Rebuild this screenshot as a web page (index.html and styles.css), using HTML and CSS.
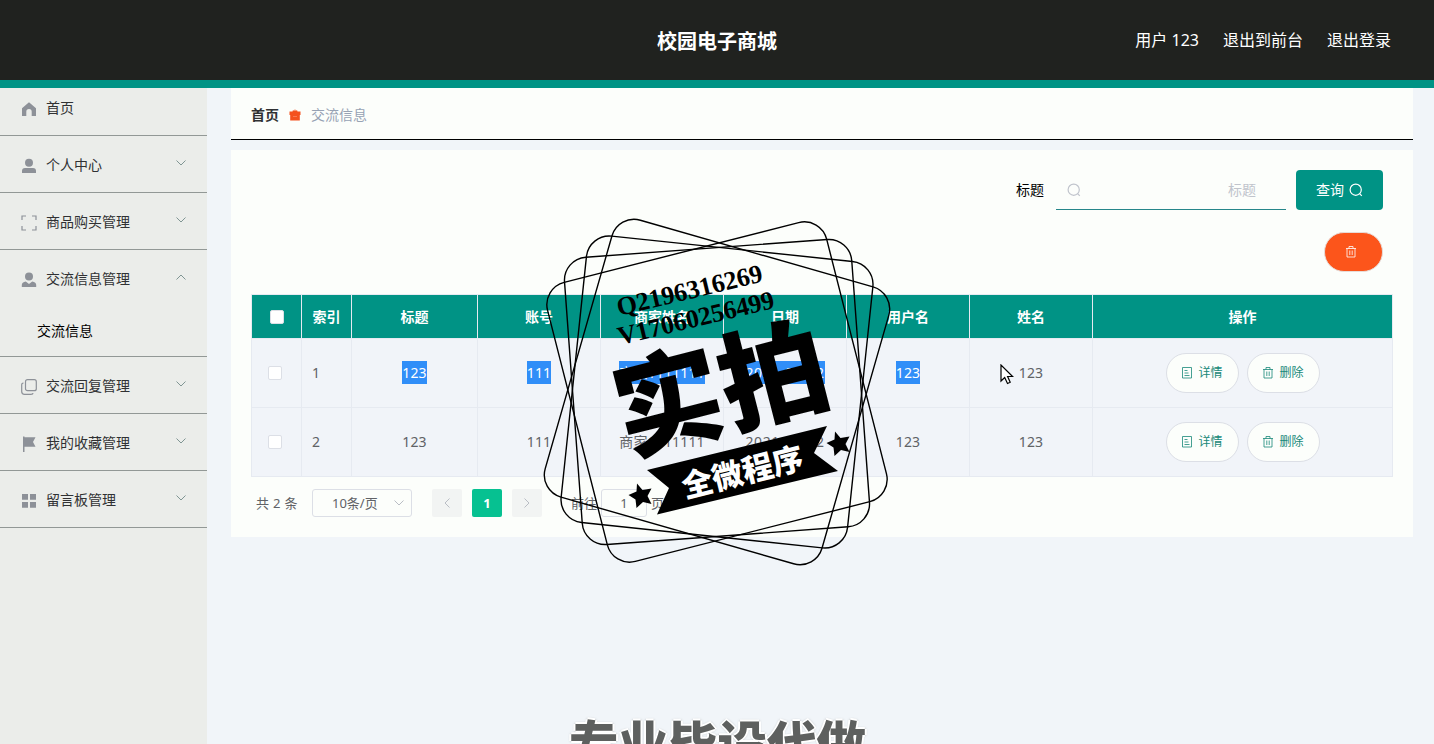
FILE: index.html
```html
<!DOCTYPE html>
<html lang="zh-CN">
    <head>
        <meta charset="utf-8">
        <title>校园电子商城</title>
        <link rel="stylesheet" href="styles.css">
    </head>
    <body>
        <svg class="sprite" width="0" height="0">
            <symbol id="arrow" viewBox="0 0 12 12"><path d="M1.5 3.5 6 8l4.5-4.5" fill="none" stroke="currentColor"/></symbol>
            <symbol id="search" viewBox="0 0 14 14"><circle cx="6.7" cy="6.7" r="5.6" fill="none" stroke="currentColor" stroke-width="1.2"/><path d="m10.6 10.6 2.2 2.2" stroke="currentColor" stroke-width="1.2"/></symbol>
            <symbol id="trash" viewBox="0 0 12 12"><path d="M1 2.500h10M4 2.500v-2h4v2M2 2.500v8.500h8V2.500M4.800 4.500v4.500M7.200 4.500v4.500" fill="none" stroke="currentColor" stroke-width=".8"/></symbol>
            <symbol id="doc" viewBox="0 0 12 12"><path d="M1.500.5h9v10.500h-9zM3.500 3.500h3M3.500 6h4M3.500 8.500h5" fill="none" stroke="currentColor" stroke-width=".8"/></symbol>
        </svg>
        <header class="header">
            <h1 class="title">校园电子商城</h1>
            <nav class="user-nav">
                <a>用户 123</a>
                <a>退出到前台</a>
                <a>退出登录</a>
            </nav>
        </header>
        <div class="layout">
            <aside class="sidebar">
                <div class="menu-item first">
                    <svg class="menu-icon" viewBox="0 0 16 16"><path d="M1 7.200 8 1.200l7 6V15h-4.300v-4.300a2.700 2.700 0 0 0-5.400 0V15H1z" fill="currentColor"/></svg>
                    <span>首页</span>
                </div>
                <div class="menu-item">
                    <svg class="menu-icon" viewBox="0 0 16 16"><circle cx="8" cy="4.800" r="4" fill="currentColor"/><path d="M1 15v-2q0-3 3-3h8q3 0 3 3v2z" fill="currentColor"/></svg>
                    <span>个人中心</span>
                    <svg class="arrow"><use href="#arrow"/></svg>
                </div>
                <div class="menu-item">
                    <svg class="menu-icon" viewBox="0 0 16 16"><path d="M1 5V1h4M11 1h4v4M15 11v4h-4M5 15H1v-4" fill="none" stroke="currentColor" stroke-width="1.200"/></svg>
                    <span>商品购买管理</span>
                    <svg class="arrow"><use href="#arrow"/></svg>
                </div>
                <div class="menu-group">
                    <div class="menu-item">
                        <svg class="menu-icon" viewBox="0 0 16 16"><circle cx="8" cy="4.600" r="4" fill="currentColor"/><path d="M.8 15v-2q0-3 4-3.500L8 12l3.200-2.500q4 .5 4 3.500v2z" fill="currentColor"/></svg>
                        <span>交流信息管理</span>
                        <svg class="arrow open"><use href="#arrow"/></svg>
                    </div>
                    <div class="submenu-item">交流信息</div>
                </div>
                <div class="menu-item">
                    <svg class="menu-icon" viewBox="0 0 16 16"><rect x="4.500" y=".7" width="10.800" height="11" rx="2" fill="none" stroke="currentColor" stroke-width="1.200"/><path d="M2.500 4C1 4 .7 4.800.7 6v6.500q0 2.800 2.800 2.800h6.500q2 0 2-1.300" fill="none" stroke="currentColor" stroke-width="1.200"/></svg>
                    <span>交流回复管理</span>
                    <svg class="arrow"><use href="#arrow"/></svg>
                </div>
                <div class="menu-item">
                    <svg class="menu-icon" viewBox="0 0 16 16"><path d="M2 .5h1.500V16H2zM3.500 1.200h11L12 6l2.500 4.800h-11z" fill="currentColor"/></svg>
                    <span>我的收藏管理</span>
                    <svg class="arrow"><use href="#arrow"/></svg>
                </div>
                <div class="menu-item">
                    <svg class="menu-icon" viewBox="0 0 16 16"><path d="M1 1h6v5.700H1zM9 1h6v5.700H9zM1 9h6v5.700H1zM9 9h6v5.700H9z" fill="currentColor"/></svg>
                    <span>留言板管理</span>
                    <svg class="arrow"><use href="#arrow"/></svg>
                </div>
            </aside>
            <main class="main">
                <div class="breadcrumb">
                    <b>首页</b>
                    <svg class="gift" viewBox="0 0 12 12"><path d="M.5 2.500h3L4 1l1.200 1L6 0l.8 2L8 1l.5 1.500h3V6H.5zM1.200 6h9.600v5.500H1.200z" fill="#f4511e"/><path d="M4 7.500h4" stroke="#fa8b66" stroke-width=".7"/></svg>
                    <span class="current">交流信息</span>
                </div>
                <section class="card">
                    <form class="search">
                        <label>标题</label>
                        <div class="search-input">
                            <svg class="icon-14"><use href="#search"/></svg>
                            <span>标题</span>
                        </div>
                        <div class="btn-query">查询 <svg class="icon-14"><use href="#search"/></svg></div>
                    </form>
                    <div class="tools">
                        <div class="btn-delete"><svg class="icon-12"><use href="#trash"/></svg></div>
                    </div>
                    <table class="table">
                        <colgroup>
                            <col class="w50"><col class="w50"><col class="w126">
                            <col class="w123"><col class="w123"><col class="w123"><col class="w123"><col class="w123">
                            <col>
                        </colgroup>
                        <thead>
                            <tr>
                                <th><i class="check"></i></th>
                                <th>索引</th>
                                <th>标题</th>
                                <th>账号</th>
                                <th>商家姓名</th>
                                <th>日期</th>
                                <th>用户名</th>
                                <th>姓名</th>
                                <th>操作</th>
                            </tr>
                        </thead>
                        <tbody>
                            <tr>
                                <td><i class="check"></i></td>
                                <td class="index">1</td>
                                <td><span class="selected">123</span></td>
                                <td><span class="selected">111</span></td>
                                <td><span class="selected">商家1111111</span></td>
                                <td class="date"><span class="selected">2021-03-12</span></td>
                                <td><span class="selected">123</span></td>
                                <td>123</td>
                                <td>
                                    <div class="actions">
                                        <a class="btn-row"><svg class="icon-12"><use href="#doc"/></svg>详情</a>
                                        <a class="btn-row"><svg class="icon-12"><use href="#trash"/></svg>删除</a>
                                    </div>
                                </td>
                            </tr>
                            <tr>
                                <td><i class="check"></i></td>
                                <td class="index">2</td>
                                <td>123</td>
                                <td>111</td>
                                <td>商家1111111</td>
                                <td class="date">2021-03-12</td>
                                <td>123</td>
                                <td>123</td>
                                <td>
                                    <div class="actions">
                                        <a class="btn-row"><svg class="icon-12"><use href="#doc"/></svg>详情</a>
                                        <a class="btn-row"><svg class="icon-12"><use href="#trash"/></svg>删除</a>
                                    </div>
                                </td>
                            </tr>
                        </tbody>
                    </table>
                    <div class="pagination">
                        <span class="total">共 2 条</span>
                        <div class="page-size">10条/页<svg class="arrow"><use href="#arrow"/></svg></div>
                        <div class="pager"><svg class="arrow left"><use href="#arrow"/></svg></div>
                        <div class="pager active">1</div>
                        <div class="pager"><svg class="arrow right"><use href="#arrow"/></svg></div>
                        <span class="jump">前往</span>
                        <div class="jump-input">1</div>
                        <span>页</span>
                    </div>
                </section>
            </main>
        </div>

        <svg class="stamp" viewBox="537 211 360 360">
            <g fill="none" stroke="#000" stroke-width="1.400">
                <rect x="573" y="248" width="288" height="288" rx="23" transform="rotate(16 717 392)"/>
                <rect x="573" y="248" width="288" height="288" rx="23" transform="rotate(6 717 392)"/>
                <rect x="573" y="248" width="288" height="288" rx="23" transform="rotate(-4.200 717 392)"/>
                <rect x="573" y="248" width="288" height="288" rx="23" transform="rotate(-14.300 717 392)"/>
            </g>
            <text class="stamp-num" transform="translate(619 316) rotate(-13.500)" textLength="149">Q2196316269</text>
            <text class="stamp-num" transform="translate(620 345) rotate(-13.500)" textLength="160">V17060256499</text>
            <text class="stamp-big" transform="translate(626 454) rotate(-14.300)">实拍</text>
            <path d="M647 470 827 426 814 453 838 471 657 514.500 669 488z"/>
            <text class="stamp-small" transform="translate(685 498) rotate(-14)">全微程序</text>
            <path id="star" d="m637 483.500 5.500 6.500 9-1.500-4 7.500 4 8-8.500-2-6.500 6-1-8.500-7-4.500 8-3.500z"/>
            <use href="#star" x="198" y="-52"/>
        </svg>
        <div class="promo">专业毕设代做</div>
        <svg class="cursor" viewBox="0 0 14 21"><path d="M1 1v16l3.700-3.500L7.500 19.500l2.700-1.200-2.600-5.800h5z" fill="#fff" stroke="#000" stroke-width="1.200"/></svg>
    </body>
</html>
```

FILE: styles.css
```css
* {
    box-sizing: border-box;
}
body {
    margin: 0;
    height: 744px;
    position: relative;
    overflow: hidden;
    display: flex;
    flex-direction: column;
    background: #f1f5f9;
    color: #606266;
    font: 14px/20px "Noto Sans", "Noto Sans CJK SC", sans-serif;
}
.sprite {
    position: absolute;
}
.header {
    height: 88px;
    flex-shrink: 0;
    display: grid;
    grid-template-columns: 1fr auto 1fr;
    align-items: center;
    padding: 0 43px;
    background: #20221f;
    border-bottom: 8px solid #009385;
    color: #fff;
}
.title {
    grid-column: 2;
    margin: 0;
    padding-top: 3px;
    font-size: 20px;
    line-height: 28px;
}
.user-nav {
    display: flex;
    justify-content: flex-end;
    gap: 24px;
    font-size: 16px;
}
.layout {
    flex: 1;
    display: flex;
}

/* sidebar */
.sidebar {
    width: 207px;
    background: #ebedea;
}
.menu-item {
    height: 57px;
    display: flex;
    align-items: center;
    padding: 1px 20px 0 21px;
    border-bottom: 1px solid #929896;
    color: #303133;
}
.menu-item.first {
    height: 48px;
    padding-bottom: 8px;
}
.menu-icon {
    width: 16px;
    height: 16px;
    margin: 2px 9px 0 0;
    color: #8d9198;
}
.arrow {
    width: 12px;
    height: 12px;
    color: #7f9593;
}
.menu-item .arrow {
    margin: 0 0 4px auto;
}
.arrow.open {
    transform: rotate(180deg);
}
.menu-group {
    height: 107px;
    border-bottom: 1px solid #929896;
}
.menu-group .menu-item {
    padding-top: 0;
    border-bottom: 0;
}
.submenu-item {
    padding: 14px 37px;
    color: #000;
}

/* content */
.main {
    flex: 1;
    padding: 0 21px 0 24px;
}
.breadcrumb {
    height: 52px;
    display: flex;
    align-items: center;
    padding: 2px 20px 0;
    background: #fcfefb;
    border-bottom: 1px solid #000;
    color: #303133;
}
.gift {
    width: 12px;
    height: 12px;
    margin: 0 10px;
}
.current {
    color: #97a2b4;
}
.card {
    height: 387px;
    margin-top: 10px;
    padding: 20px;
    background: #fcfefb;
}
.search {
    height: 40px;
    display: flex;
    justify-content: flex-end;
    align-items: center;
    padding-right: 10px;
    color: #000;
}
.search-input {
    width: 230px;
    height: 40px;
    display: flex;
    align-items: center;
    justify-content: space-between;
    margin: 0 10px 0 12px;
    padding: 0 30px 0 11px;
    border-bottom: 1px solid #26868a;
    color: #c0c4cc;
}
.icon-14 {
    width: 14px;
    height: 14px;
}
.icon-12 {
    width: 12px;
    height: 12px;
}
.btn-query {
    width: 87px;
    height: 40px;
    display: flex;
    align-items: center;
    justify-content: center;
    gap: 5px;
    border-radius: 4px;
    background: #009385;
    color: #fff;
}
.tools {
    display: flex;
    justify-content: flex-end;
    padding: 22px 10px;
}
.btn-delete {
    width: 59px;
    height: 40px;
    display: flex;
    align-items: center;
    justify-content: center;
    padding-right: 5px;
    border: 1px solid #e7dcd8;
    border-radius: 20px;
    background: #fc551b;
    color: #fff;
}
.table {
    width: 1142px;
    table-layout: fixed;
    border-collapse: collapse;
    text-align: center;
}
.w50 {
    width: 50px;
}
.w123 {
    width: 123px;
}
.w126 {
    width: 126px;
}
.table th,
.table td {
    padding: 0;
    border: 1px solid #e6eaf1;
}
.table th {
    height: 44px;
    background: #009385;
    color: #fff;
}
.table td {
    height: 69px;
    background: #f1f4f9;
    letter-spacing: .15px;
}
.table .date {
    letter-spacing: .6px;
}
.table .index {
    padding-left: 10px;
    text-align: left;
}
.check {
    display: block;
    width: 14px;
    height: 14px;
    margin: 0 auto;
    border: 1px solid #dcdfe6;
    border-radius: 2px;
    background: #fff;
}
td .check {
    transform: translateX(-2px);
}
.selected {
    display: block;
    width: fit-content;
    height: 23px;
    margin: -1px auto 0;
    line-height: 23px;
    background: #308ef8;
    color: #fff;
}
.actions {
    display: flex;
    justify-content: center;
    gap: 8px;
}
.btn-row {
    width: 73px;
    height: 40px;
    display: flex;
    align-items: center;
    justify-content: center;
    gap: 5px;
    border: 1px solid #dcdfe6;
    border-radius: 20px;
    background: #fcfefb;
    color: #178878;
    font-size: 12px;
    letter-spacing: 0;
}
.pagination {
    display: flex;
    align-items: center;
    padding: 12px 5px;
    font-size: 13px;
}
.total {
    width: 56px;
    white-space: nowrap;
    letter-spacing: .3px;
}
.page-size {
    width: 100px;
    height: 28px;
    display: flex;
    align-items: center;
    justify-content: space-between;
    margin-right: 20px;
    padding: 0 6px 0 19px;
    border: 1px solid #dcdfe6;
    border-radius: 3px;
}
.pagination .arrow {
    color: #b9bdc4;
}
.pager {
    width: 30px;
    height: 28px;
    display: flex;
    align-items: center;
    justify-content: center;
    margin-right: 10px;
    border-radius: 2px;
    background: #f2f4f3;
}
.pager.active {
    background: #06c191;
    color: #fff;
    font-weight: bold;
}
.arrow.left {
    transform: rotate(90deg);
}
.arrow.right {
    transform: rotate(-90deg);
}
.jump {
    margin-left: 19px;
}
.jump-input {
    width: 46px;
    height: 28px;
    margin: 0 4px;
    border: 1px solid #dcdfe6;
    border-radius: 3px;
    line-height: 26px;
    text-align: center;
}

/* overlays */
.stamp {
    position: absolute;
    left: 537px;
    top: 211px;
    width: 360px;
    height: 360px;
}
.stamp-num {
    font: bold 26px "Liberation Serif", serif;
}
.stamp-big {
    font: 900 108px "Noto Sans CJK SC", sans-serif;
}
.stamp-small {
    font: 900 31px "Noto Sans CJK SC", sans-serif;
    fill: #fff;
}
.promo {
    position: absolute;
    left: 569px;
    top: 706px;
    color: #5e605f;
    font: 900 49.5px/72px "Noto Sans CJK SC", sans-serif;
    white-space: nowrap;
    text-shadow: 2px 0 #fff, -2px 0 #fff, 0 2px #fff, 0 -2px #fff, 0 0 3px #444;
}
.cursor {
    position: absolute;
    left: 1000px;
    top: 364px;
    width: 14px;
    height: 21px;
}
```
